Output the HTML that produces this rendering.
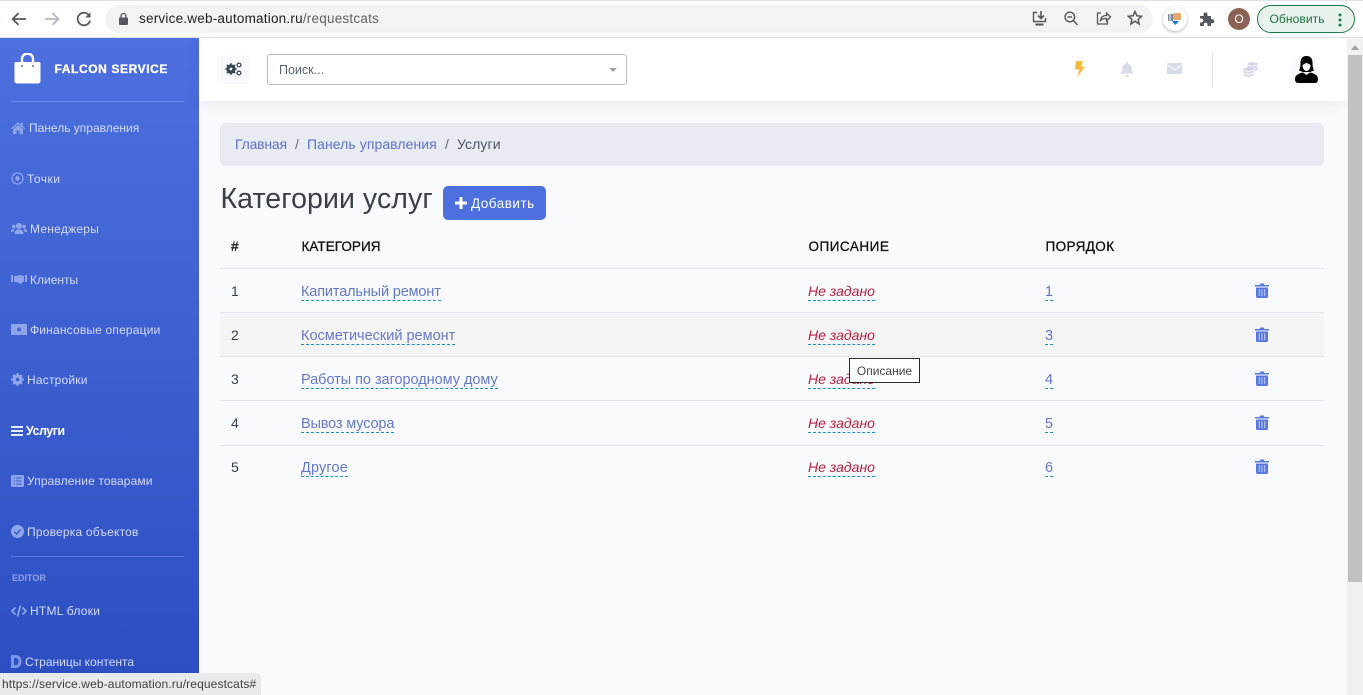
<!DOCTYPE html>
<html lang="ru"><head><meta charset="utf-8"><title>Категории услуг</title>
<style>
*{box-sizing:border-box}
html,body{margin:0;padding:0;width:1363px;height:695px;overflow:hidden;background:#f9fafd;font-family:"Liberation Sans","Noto Sans CJK SC",sans-serif;color:#344050}
.a{position:absolute;white-space:nowrap}
svg{position:absolute;display:block}
#side{position:absolute;left:0;top:38px;width:199px;height:657px;background:linear-gradient(180deg,#4d70de 0%,#2b4dc0 100%)}
.m{position:absolute;font-size:12px;color:#d3dcf7;white-space:nowrap;line-height:16px}
.i{fill:#8fa5ea}
.l{color:#6578c8;border-bottom:1px dashed #1b8cc0;font-size:14.5px;line-height:19px;height:18px}
.n{color:#b6223f;font-style:italic;border-bottom:1px dashed #1b8cc0;font-size:14px;line-height:17px;height:18px}
.d{color:#344050;font-size:14px;line-height:18px}
.hr{position:absolute;left:220px;width:1104px;height:1px;background:#e3e6ee}
.th{color:#111;font-size:13.5px;font-weight:400;line-height:18px;-webkit-text-stroke:.3px #111}
</style></head><body>

<!-- browser chrome -->
<div class="a" style="left:0;top:0;width:1363px;height:38px;background:#fff;border-bottom:1px solid #dfe1e5"></div>
<div class="a" style="left:0;top:0;width:1363px;height:1px;background:#dee1e6"></div>
<svg style="left:9px;top:10px" width="20" height="18" viewBox="0 0 20 18"><path d="M17 9H4M9.5 3.2 3.6 9l5.9 5.8" fill="none" stroke="#54585e" stroke-width="1.8"/></svg>
<svg style="left:42px;top:10px" width="20" height="18" viewBox="0 0 20 18"><path d="M3 9h13M10.500 3.200 16.400 9l-5.900 5.800" fill="none" stroke="#b4b7bb" stroke-width="1.800"/></svg>
<svg style="left:75px;top:10px" width="18" height="18" viewBox="0 0 18 18"><path d="M14.300 5.600A6.300 6.300 0 1 0 15.100 10.500" fill="none" stroke="#54585e" stroke-width="1.800"/><path d="M15.500 2.200V7.500H10.200Z" fill="#54585e"/></svg>
<div class="a" style="left:105px;top:5px;width:1048px;height:28px;border-radius:14px;background:#f1f3f4"></div>
<svg style="left:118px;top:12px" width="11" height="14" viewBox="0 0 11 14"><path d="M3 6V4a2.500 2.500 0 0 1 5 0v2" fill="none" stroke="#54585e" stroke-width="1.300"/><rect x="1" y="5.500" width="9" height="7.500" rx="1" fill="#54585e"/></svg>
<div class="a" style="left:139px;top:11px;font-size:13.500px;line-height:16px;color:#202124;letter-spacing:.22px">service.web-automation.ru<span style="color:#5f6368">/requestcats</span></div>
<svg style="left:1031px;top:10px" width="17" height="17" viewBox="0 0 17 17"><path d="M6 2.500H2.500v9h12V8" fill="none" stroke="#54585e" stroke-width="1.400"/><path d="M10 1v7M7 5.500l3 3 3-3" fill="none" stroke="#54585e" stroke-width="1.600"/><path d="M4.500 14.500h8" stroke="#54585e" stroke-width="2"/></svg>
<svg style="left:1063px;top:10px" width="16" height="17" viewBox="0 0 16 17"><circle cx="6.800" cy="7" r="4.800" fill="none" stroke="#54585e" stroke-width="1.400"/><path d="M10.300 10.500 14.500 15M4.500 7h4.600" stroke="#54585e" stroke-width="1.400"/></svg>
<svg style="left:1095px;top:10px" width="17" height="17" viewBox="0 0 17 17"><path d="M6 3H2.500v11h10v-3" fill="none" stroke="#54585e" stroke-width="1.300"/><path d="M5.500 10.500c.5-3.500 3-5 6-5V3l4 4-4 4V8.500c-2.500 0-4.500.5-6 2z" fill="none" stroke="#54585e" stroke-width="1.300"/></svg>
<svg style="left:1127px;top:10px" width="16" height="16" viewBox="0 0 16 16"><path d="M8 1.500l1.900 4.300 4.700.5-3.500 3.100 1 4.600L8 11.200l-4.100 2.800 1-4.600L1.400 6.300l4.700-.5z" fill="none" stroke="#54585e" stroke-width="1.500"/></svg>
<div class="a" style="left:1163px;top:7px;width:24px;height:24px;border-radius:50%;background:#fff;box-shadow:0 1px 3px rgba(0,0,0,.3)"></div>
<svg style="left:1167px;top:12px" width="16" height="15" viewBox="0 0 16 15"><rect x="1" y="2" width="5" height="7" fill="#7c8a97"/><rect x="6" y="1" width="8" height="7" rx="1" fill="#eaa96c"/><path d="M3 2v7" stroke="#fff"/><path d="M5 9h7l-3.500 4z" fill="#1976d2"/></svg>
<svg style="left:1199px;top:11px" width="16" height="16" viewBox="0 0 16 16"><path d="M1 5h3.500V3.500a2 2 0 0 1 4 0V5H12v3.300h1.300a2 2 0 0 1 0 4H12V15H8.500v-1.500a1.800 1.800 0 0 0-3.600 0V15H1v-3.500h1.200a2 2 0 0 0 0-4H1z" fill="#54585e"/></svg>
<div class="a" style="left:1228px;top:8px;width:22px;height:22px;border-radius:50%;background:#8b6355;color:#fff;font-size:12px;line-height:22px;text-align:center">O</div>
<div class="a" style="left:1257px;top:5px;width:98px;height:28px;border-radius:14px;border:1px solid #1e7a46;background:#e8f3ec;color:#1e6e40;font-size:12px;line-height:26px;padding-left:11.500px;letter-spacing:.1px">Обновить</div>
<svg style="left:1338px;top:13px" width="4" height="14" viewBox="0 0 4 14"><circle cx="2" cy="2" r="1.500" fill="#1e7a46"/><circle cx="2" cy="7" r="1.500" fill="#1e7a46"/><circle cx="2" cy="12" r="1.500" fill="#1e7a46"/></svg>

<!-- sidebar -->
<div id="side"></div>
<svg style="left:14px;top:53px" width="27" height="31" viewBox="0 0 27 31"><path d="M2 9h23a1.500 1.500 0 0 1 1.500 1.500V28a2.500 2.500 0 0 1-2.500 2.500H3A2.500 2.500 0 0 1 .5 28V10.500A1.500 1.500 0 0 1 2 9z" fill="#fff"/><path d="M8 10V6a5.500 5.500 0 0 1 11 0v4" fill="none" stroke="#fff" stroke-width="2.400"/><circle cx="8" cy="13" r="1" fill="#4d70de"/><circle cx="19" cy="13" r="1" fill="#4d70de"/></svg>
<div class="a" style="left:54.500px;top:62px;color:#fff;font-size:12px;font-weight:700;line-height:15px;letter-spacing:.6px;-webkit-text-stroke:.3px #fff">FALCON SERVICE</div>
<div class="a" style="left:11px;top:101px;width:173px;height:1px;background:#6d89e6"></div>

<svg class="i" style="left:11px;top:122px" width="14" height="12" viewBox="0 0 14 12"><path d="M7 .3 0 6.300l.8 1L7 2 13.200 7.300l.8-1-2.300-2V.7H10v2.100z"/><path d="M2 7.200 7 3l5 4.200V12H8.500V8.500h-3V12H2z"/></svg>
<div class="m" style="left:29px;top:120px">Панель управления</div>
<svg style="left:11px;top:172px" width="13" height="13" viewBox="0 0 13 13"><circle cx="6.500" cy="6.500" r="5.500" fill="none" stroke="#8fa5ea" stroke-width="1.200"/><circle cx="6.500" cy="6.500" r="2.200" fill="#8fa5ea"/></svg>
<div class="m" style="left:27px;top:171px;letter-spacing:.5px">Точки</div>
<svg class="i" style="left:11px;top:222px" width="16" height="13" viewBox="0 0 16 13"><circle cx="8" cy="4" r="3"/><circle cx="2.800" cy="4.500" r="1.800"/><circle cx="13.200" cy="4.500" r="1.800"/><path d="M3.500 12c0-3 1.500-4.500 4.500-4.500s4.500 1.500 4.500 4.500zM0 10c0-2 .8-3.200 3-3.200l.5.200C2.700 8 2.400 9 2.400 10zM16 10c0-2-.8-3.200-3-3.200l-.5.200c.8 1 1.100 2 1.100 3z"/></svg>
<div class="m" style="left:30px;top:221px;letter-spacing:.25px">Менеджеры</div>
<svg class="i" style="left:11px;top:274px" width="16" height="11" viewBox="0 0 16 11"><path d="M0 1h2v7H0zM14 1h2v7h-2zM3 2h3l2-1 2 .2 3 .8v5l-3.500 3L7 8.500 3 7.500z"/></svg>
<div class="m" style="left:30px;top:272px">Клиенты</div>
<svg style="left:11px;top:324px" width="16" height="11" viewBox="0 0 16 11"><rect width="16" height="11" fill="#8fa5ea"/><circle cx="8" cy="5.500" r="2" fill="#4566d3"/></svg>
<div class="m" style="left:30px;top:322px;letter-spacing:.18px">Финансовые операции</div>
<svg style="left:11px;top:373px" width="13" height="13" viewBox="0 0 13 13"><circle cx="6.500" cy="6.500" r="3.900" fill="none" stroke="#8fa5ea" stroke-width="2.600"/><path d="M6.500 0v13M0 6.500h13M2 2l9 9M11 2l-9 9" stroke="#8fa5ea" stroke-width="1.800"/><circle cx="6.500" cy="6.500" r="1.700" fill="#3c5dca"/></svg>
<div class="m" style="left:27px;top:372px;letter-spacing:.2px">Настройки</div>
<svg style="left:11px;top:426px" width="12" height="10" viewBox="0 0 12 10"><path d="M0 1h12M0 5h12M0 9h12" stroke="#fff" stroke-width="1.700"/></svg>
<div class="m" style="left:26px;top:423px;color:#fff;font-weight:700;font-size:12.500px;letter-spacing:-.5px">Услуги</div>
<svg style="left:11px;top:475px" width="13" height="12" viewBox="0 0 13 12"><rect width="13" height="12" rx="1.500" fill="#8fa5ea"/><path d="M2.500 3h1.500M5 3h5.500M2.500 6h1.500M5 6h5.500M2.500 9h1.500M5 9h5.500" stroke="#3a5ac8"/></svg>
<div class="m" style="left:27px;top:473px;letter-spacing:.12px">Управление товарами</div>
<svg style="left:11px;top:525px" width="13" height="13" viewBox="0 0 13 13"><circle cx="6.500" cy="6.500" r="6.500" fill="#8fa5ea"/><path d="M3.500 6.800 5.600 9l4-4.300" fill="none" stroke="#3555c5" stroke-width="1.400"/></svg>
<div class="m" style="left:27px;top:524px;letter-spacing:.2px">Проверка объектов</div>
<div class="a" style="left:11px;top:556px;width:173px;height:1px;background:#5a78dc"></div>
<div class="a" style="left:12px;top:572px;color:#8ea3e6;font-size:9px;font-weight:700;line-height:12px">EDITOR</div>
<svg style="left:11px;top:605px" width="16" height="12" viewBox="0 0 16 12"><path d="M4.500 2.500 1 6l3.500 3.500M11.500 2.500 15 6l-3.500 3.500M9.500.5l-3 11" fill="none" stroke="#8fa5ea" stroke-width="1.700"/></svg>
<div class="m" style="left:30px;top:603px;letter-spacing:.25px">HTML блоки</div>
<svg style="left:11px;top:655px" width="11" height="13" viewBox="0 0 11 13"><path d="M0 0h5a5.500 6.500 0 0 1 0 13H0zM3 3v7h2a2.500 3.500 0 0 0 0-7z" fill="#7d95e6"/></svg>
<div class="m" style="left:25px;top:654px">Страницы контента</div>

<!-- top bar -->
<div class="a" style="left:199px;top:38px;width:1148px;height:63px;background:#fff;box-shadow:0 4px 14px rgba(50,60,90,.07)"></div>
<div class="a" style="left:217px;top:55px;width:32px;height:29px;background:#f9fafd;border-radius:3px"></div>
<svg style="left:225px;top:62px" width="17" height="14" viewBox="0 0 17 14"><circle cx="6" cy="7" r="3.400" fill="none" stroke="#3a4656" stroke-width="2.600"/><path d="M6 1.200v11.600M.2 7h11.600M1.900 2.900l8.200 8.200M10.100 2.900l-8.200 8.200" stroke="#3a4656" stroke-width="1.600"/><circle cx="6" cy="7" r="1.400" fill="#fff"/><circle cx="14" cy="3" r="1.900" fill="none" stroke="#3a4656" stroke-width="1.300"/><circle cx="14" cy="11" r="1.900" fill="none" stroke="#3a4656" stroke-width="1.300"/></svg>
<div class="a" style="left:267px;top:54px;width:360px;height:31px;border:1px solid #b9bcc2;border-radius:3px;background:#fff"></div>
<div class="a" style="left:279px;top:63px;color:#5a6470;font-size:12.500px;line-height:15px">Поиск...</div>
<div class="a" style="left:609px;top:68px;width:0;height:0;border-left:4px solid transparent;border-right:4px solid transparent;border-top:4px solid #9da3ab"></div>
<svg style="left:1075px;top:61px" width="10" height="16" viewBox="0 0 10 16"><path d="M1 0h7L6 5.500h4L2.500 16l1.700-7.500H0z" fill="#f5b93e"/></svg>
<svg style="left:1120px;top:62px" width="14" height="15" viewBox="0 0 14 15"><path d="M7 0c.6 0 1 .4 1 1v.6c2.500.5 3.700 2.500 3.700 5 0 2.700 1 3.800 2.300 5H0c1.300-1.200 2.300-2.300 2.300-5 0-2.500 1.200-4.500 3.700-5V1c0-.6.400-1 1-1zM5 13h4a2 2 0 0 1-4 0z" fill="#d8dce8"/></svg>
<svg style="left:1167px;top:63px" width="15" height="11" viewBox="0 0 15 11"><rect width="15" height="11" rx="1" fill="#d8dce8"/><path d="M0 1.500 7.500 7 15 1.500" fill="none" stroke="#fff" stroke-width=".9"/></svg>
<div class="a" style="left:1212px;top:52px;width:1px;height:35px;background:#e3e6ee"></div>
<svg style="left:1243px;top:62px" width="15" height="15" viewBox="0 0 15 15"><g fill="#d4d8e6"><ellipse cx="9.500" cy="1.900" rx="5.300" ry="1.800"/><path d="M4.200 3.200c1 .8 3 1.200 5.300 1.200s4.300-.4 5.300-1.200v1.300c0 1-2.400 1.800-5.300 1.800-1 0-2-.1-2.800-.3C5.500 5.700 4.200 5 4.200 4.500z"/><path d="M11 7c1.500-.2 3-.7 3.800-1.300v1.300c0 .7-1.500 1.500-3.800 1.700z"/><ellipse cx="5.500" cy="7.200" rx="5.300" ry="1.800"/><path d="M.2 8.600c1 .8 3 1.200 5.300 1.200s4.300-.4 5.300-1.200v1.300c0 1-2.400 1.800-5.300 1.800S.2 10.900.2 9.900z"/><path d="M.2 11.500c1 .8 3 1.200 5.300 1.200s4.300-.4 5.300-1.200v1.300c0 1-2.400 1.800-5.300 1.800S.2 13.800.2 12.800z"/></g></svg>
<div class="a" style="left:1292px;top:55px;width:28px;height:28px;border-radius:50%;background:#f9fafd"></div>
<svg style="left:1293px;top:55px" width="27" height="29" viewBox="0 0 27 29"><path d="M13.500 1C9 1 7.500 4 7.500 8c0 3.500-.5 5.500-1.500 7.500l4 1.500h7l4-1.500c-1-2-1.500-4-1.500-7.500 0-4-1.500-7-6-7z" fill="#000"/><path d="M13.500 8c2.300.8 3.500 1.300 4 2.500 0 2.800-1.800 5.500-4 5.500s-4-2.700-4-5.500c.5-1.200 2-1.700 4-2.500z" fill="#fff"/><path d="M10 17.500 13.500 20l3.500-2.500c5 1 8 3 8 6.500 0 2.500-1 4-3 4H5c-2 0-3-1.500-3-4 0-3.500 3-5.500 8-6.500z" fill="#000"/></svg>

<!-- scrollbar -->
<div class="a" style="left:1347px;top:38px;width:16px;height:657px;background:#f1f1f1"></div>
<div class="a" style="left:1351px;top:45px;width:0;height:0;border-left:4px solid transparent;border-right:4px solid transparent;border-bottom:5px solid #a3a3a3"></div>
<div class="a" style="left:1348px;top:55px;width:14px;height:527px;background:#c1c1c1"></div>

<!-- breadcrumb -->
<div class="a" style="left:220px;top:123px;width:1104px;height:43px;background:#e9ebf3;border-radius:5px"></div>
<div class="a" style="left:235px;top:136px;font-size:14px;line-height:17px;color:#5e72c9;letter-spacing:-.2px">Главная</div>
<div class="a" style="left:295px;top:136px;font-size:14px;line-height:17px;color:#5e6b7a">/</div>
<div class="a" style="left:307px;top:136px;font-size:14px;line-height:17px;color:#5e72c9;letter-spacing:.07px">Панель управления</div>
<div class="a" style="left:445px;top:136px;font-size:14px;line-height:17px;color:#5e6b7a">/</div>
<div class="a" style="left:457px;top:136px;font-size:14px;line-height:17px;color:#4a5461;letter-spacing:.1px">Услуги</div>

<!-- title -->
<div class="a" style="left:220.500px;top:182px;font-size:28.500px;line-height:35px;color:#3a4048;letter-spacing:.08px">Категории услуг</div>
<div class="a" style="left:443px;top:186px;width:103px;height:34px;background:#4d70de;border-radius:5px"></div>
<svg style="left:454px;top:196px" width="14" height="14" viewBox="0 0 14 14"><path d="M7 1v12M1 7h12" stroke="#fff" stroke-width="3"/></svg>
<div class="a" style="left:471px;top:195px;font-size:13.500px;line-height:17px;color:#fff;letter-spacing:.5px">Добавить</div>

<!-- table -->
<div class="a th" style="left:231px;top:237.500px">#</div>
<div class="a th" style="left:301.500px;top:237.500px;letter-spacing:.05px">КАТЕГОРИЯ</div>
<div class="a th" style="left:808.500px;top:237.500px;letter-spacing:.5px">ОПИСАНИЕ</div>
<div class="a th" style="left:1045.500px;top:237.500px;letter-spacing:.4px">ПОРЯДОК</div>

<div class="a" style="left:220px;top:313px;width:1104px;height:44px;background:#f5f5f5"></div>
<div class="hr" style="top:268px"></div>
<div class="hr" style="top:312px"></div>
<div class="hr" style="top:356px"></div>
<div class="hr" style="top:400px"></div>
<div class="hr" style="top:445px"></div>

<div class="a d" style="left:231px;top:282px">1</div>
<div class="a l" style="left:301px;top:283px;letter-spacing:-.15px">Капитальный ремонт</div>
<div class="a n" style="left:808px;top:283px">Не задано</div>
<div class="a l" style="left:1045px;top:283px">1</div>

<div class="a d" style="left:231px;top:326px">2</div>
<div class="a l" style="left:301px;top:327px">Косметический ремонт</div>
<div class="a n" style="left:808px;top:327px">Не задано</div>
<div class="a l" style="left:1045px;top:327px">3</div>

<div class="a d" style="left:231px;top:370px">3</div>
<div class="a l" style="left:301px;top:371px;letter-spacing:-.04px">Работы по загородному дому</div>
<div class="a n" style="left:808px;top:371px">Не задано</div>
<div class="a l" style="left:1045px;top:371px">4</div>

<div class="a d" style="left:231px;top:414px">4</div>
<div class="a l" style="left:301px;top:415px;letter-spacing:-.15px">Вывоз мусора</div>
<div class="a n" style="left:808px;top:415px">Не задано</div>
<div class="a l" style="left:1045px;top:415px">5</div>

<div class="a d" style="left:231px;top:458px">5</div>
<div class="a l" style="left:301px;top:459px;letter-spacing:.15px">Другое</div>
<div class="a n" style="left:808px;top:459px">Не задано</div>
<div class="a l" style="left:1045px;top:459px">6</div>

<svg style="left:1255px;top:283px" width="14" height="15" viewBox="0 0 14 15"><path d="M0 2h4.500l.7-1.500h3.600L9.500 2H14v1.500H0zM1 4.500h12V13.500A1.500 1.500 0 0 1 11.500 15h-9A1.500 1.500 0 0 1 1 13.500z" fill="#5a78dc"/><path d="M4.300 6.300v6.800M7 6.300v6.800M9.700 6.300v6.800" stroke="#c3cef3" stroke-width="1"/></svg>
<svg style="left:1255px;top:327px" width="14" height="15" viewBox="0 0 14 15"><path d="M0 2h4.500l.7-1.500h3.600L9.500 2H14v1.500H0zM1 4.500h12V13.500A1.500 1.500 0 0 1 11.500 15h-9A1.500 1.500 0 0 1 1 13.500z" fill="#5a78dc"/><path d="M4.300 6.300v6.800M7 6.300v6.800M9.700 6.300v6.800" stroke="#c3cef3" stroke-width="1"/></svg>
<svg style="left:1255px;top:371px" width="14" height="15" viewBox="0 0 14 15"><path d="M0 2h4.500l.7-1.500h3.600L9.500 2H14v1.500H0zM1 4.500h12V13.500A1.500 1.500 0 0 1 11.500 15h-9A1.500 1.500 0 0 1 1 13.500z" fill="#5a78dc"/><path d="M4.300 6.300v6.800M7 6.300v6.800M9.700 6.300v6.800" stroke="#c3cef3" stroke-width="1"/></svg>
<svg style="left:1255px;top:415px" width="14" height="15" viewBox="0 0 14 15"><path d="M0 2h4.500l.7-1.500h3.600L9.500 2H14v1.500H0zM1 4.500h12V13.500A1.500 1.500 0 0 1 11.500 15h-9A1.500 1.500 0 0 1 1 13.500z" fill="#5a78dc"/><path d="M4.300 6.300v6.800M7 6.300v6.800M9.700 6.300v6.800" stroke="#c3cef3" stroke-width="1"/></svg>
<svg style="left:1255px;top:459px" width="14" height="15" viewBox="0 0 14 15"><path d="M0 2h4.500l.7-1.500h3.600L9.500 2H14v1.500H0zM1 4.500h12V13.500A1.500 1.500 0 0 1 11.500 15h-9A1.500 1.500 0 0 1 1 13.500z" fill="#5a78dc"/><path d="M4.300 6.300v6.800M7 6.300v6.800M9.700 6.300v6.800" stroke="#c3cef3" stroke-width="1"/></svg>

<!-- tooltip -->
<div class="a" style="left:849px;top:358px;width:71px;height:25px;background:#fff;border:1px solid #2a2a2a;color:#444;font-size:12px;line-height:25px;text-align:center">Описание</div>

<!-- status bubble -->
<div class="a" style="left:0;top:673px;width:261px;height:22px;background:#e8eaed;border-top-right-radius:5px;color:#3c4043;font-size:12px;line-height:22px;padding-left:2px;letter-spacing:.12px">https://service.web-automation.ru/requestcats#</div>

</body></html>
